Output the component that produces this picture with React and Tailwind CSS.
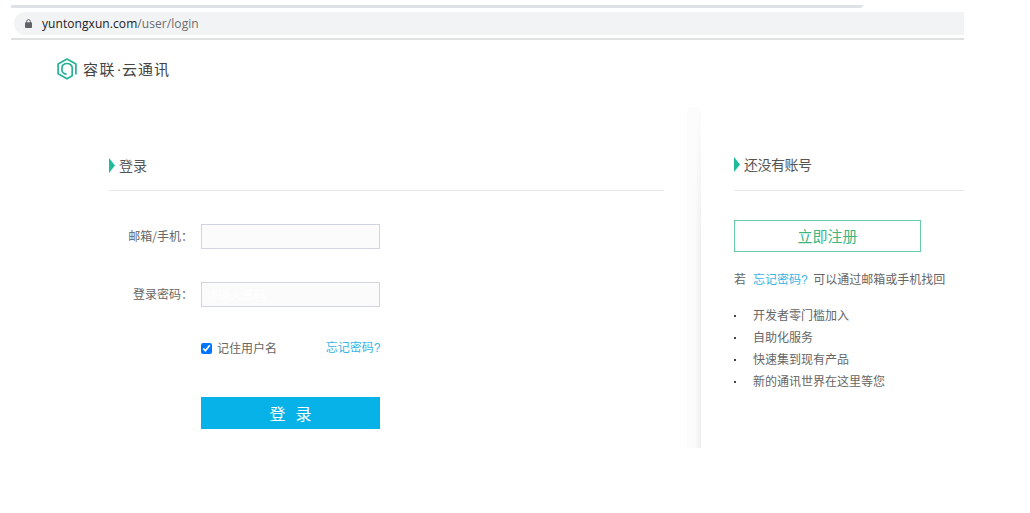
import React from 'react';

function LockIcon() {
    return (
        <svg className="w-[7px] h-[9px] shrink-0" viewBox="0 0 7 9" fill="none">
            <path d="M1.7 4V2.4a1.8 1.8 0 0 1 3.6 0V4" stroke="#5f6368" strokeWidth="1" />
            <rect x="0" y="3.2" width="7" height="5.8" rx="0.8" fill="#5f6368" />
        </svg>
    );
}

function Logo() {
    return (
        <svg className="w-5 h-[22px] shrink-0" viewBox="0 0 20 22" fill="none" stroke="#26b298" strokeWidth="1.7" strokeLinejoin="round">
            <path d="M18.9 16.4V6L10 1.1L1.1 6V15.8L10 20.8L15.2 17.8V9.4C15.2 7.4 12.8 5.5 10 5.5C7.2 5.5 5 7.4 5 9.4V12.4C5 14.4 7 15.6 9.6 16.2" />
        </svg>
    );
}

function SectionTitle({ children }) {
    return (
        <h2 className="flex items-center h-5 text-sm text-[#555] leading-5">
            <svg className="w-[6px] h-[15px] mr-1 shrink-0" viewBox="0 0 6 15">
                <path d="M0 0L6 7.5L0 15Z" fill="#1fbc9c" />
            </svg>
            {children}
        </h2>
    );
}

function Field({ label, type, placeholder }) {
    return (
        <div className="flex items-center h-[25px]">
            <label className="w-[84px] mr-2 pb-px text-right text-xs text-[#666] whitespace-nowrap">{label}</label>
            <input
                type={type}
                placeholder={placeholder}
                className="w-[179px] h-[25px] px-1 border border-[#d0d4e4] bg-[#fbfbfc] text-xs placeholder:text-white outline-none"
            />
        </div>
    );
}

const features = ['开发者零门槛加入', '自助化服务', '快速集到现有产品', '新的通讯世界在这里等您'];

export default function App() {
    return (
        <div className="w-[1030px] h-[513px] bg-white overflow-hidden font-['Noto_Sans_CJK_SC',sans-serif]">
            <div className="w-[953px] ml-[11px] pt-[5px]">
                <svg className="block w-[853px] h-[3px]" viewBox="0 0 853 3">
                    <path d="M0 0H853L850 3H0Z" fill="#dee1e6" />
                </svg>
                <div className="flex items-center h-[23px] mt-1 ml-[3px] pl-[11px] rounded-l-full bg-[#f1f3f4]">
                    <LockIcon />
                    <div className="ml-[10px] font-['Open_Sans',sans-serif] text-[12px] tracking-[0.07px] text-[#6a6d70]">
                        <span className="text-[#202124]">yuntongxun.com</span>/user/login
                    </div>
                </div>
                <div className="h-[2px] mt-[3px] bg-[#e1e1e2]"></div>
            </div>

            <header className="flex items-center h-[22px] mt-[18px] ml-[57px]">
                <Logo />
                <div className="flex ml-[6px] pb-px text-[15px] text-[#444] leading-5">
                    <span className="tracking-[1.5px]">容联</span>
                    <span className="w-[6px] text-center font-['Liberation_Sans',sans-serif]">·</span>
                    <span className="tracking-[1px]">云通讯</span>
                </div>
            </header>

            <main className="flex w-[964px] h-[341px] mt-[27px]">
                <section className="w-[555px] ml-[109px] pt-12">
                    <SectionTitle>登录</SectionTitle>
                    <div className="h-px mt-[15px] bg-[#e8e8e8]"></div>
                    <form className="mt-[33px]">
                        <Field label="邮箱/手机：" type="text" />
                        <div className="h-[33px]"></div>
                        <Field label="登录密码：" type="password" placeholder="请输入密码" />
                        <div className="flex items-center justify-between w-[180px] h-5 mt-[31px] ml-[92px] text-xs text-[#666]">
                            <label className="flex items-center">
                                <input type="checkbox" defaultChecked className="w-[11px] h-[11px] mr-[5px]" />
                                记住用户名
                            </label>
                            <a className="text-[#35b5e5]">
                                忘记密码<span className="font-['Liberation_Mono',monospace]">?</span>
                            </a>
                        </div>
                        <button
                            type="button"
                            className="block w-[179px] h-8 mt-[39px] ml-[92px] bg-[#06b2e8] text-base text-white"
                        >
                            登<span className="inline-block w-[10px]"></span>录
                        </button>
                    </form>
                </section>

                <div className="w-[14px] ml-[23px] bg-[#fcfcfc]">
                    <div className="w-[6px] h-full ml-2 bg-linear-to-r from-transparent to-[#eeeeee] mask-t-from-60%"></div>
                </div>

                <section className="flex-1 ml-[33px] pt-[47px] text-xs text-[#666]">
                    <div className="tracking-[-0.5px]">
                        <SectionTitle>还没有账号</SectionTitle>
                    </div>
                    <div className="h-px mt-4 bg-[#e8e8e8]"></div>
                    <button
                        type="button"
                        className="block w-[187px] h-8 mt-[29px] border border-[#69cba4] text-[15px] text-[#3cb57f]"
                    >
                        立即注册
                    </button>
                    <p className="flex h-5 mt-[17px] leading-5 whitespace-nowrap">
                        若
                        <a className="ml-[7px] mr-[5px] text-[#35b5e5]">
                            忘记密码<span className="font-['Liberation_Mono',monospace]">?</span>
                        </a>
                        可以通过邮箱或手机找回
                    </p>
                    <ul className="mt-[15px]">
                        {features.map((text) => (
                            <li key={text} className="flex items-center h-[22px]">
                                <span className="w-[2px] h-[2px] mt-0.5 mr-[17px] bg-[#444]"></span>
                                {text}
                            </li>
                        ))}
                    </ul>
                </section>
            </main>
        </div>
    );
}
